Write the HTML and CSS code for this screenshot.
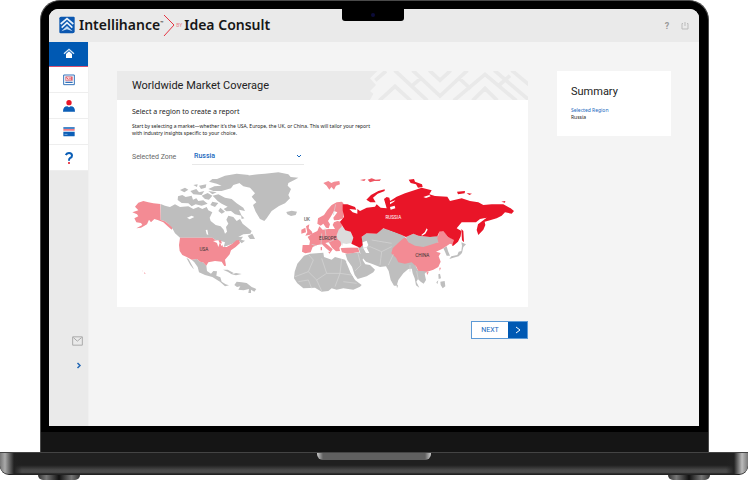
FILE: index.html
```html
<!DOCTYPE html>
<html lang="en">
<head>
<meta charset="utf-8">
<meta name="viewport" content="width=device-width, initial-scale=1">
<title>Intellihance by Idea Consult</title>
<link rel="stylesheet" href="styles.css">
</head>
<body>
<div class="laptop">
  <div class="lid">
    <div class="notch"><span class="camera"></span></div>
    <div class="screen">
      <header class="topbar">
        <a class="brand" href="#">
          <svg class="brand-mark" viewBox="0 0 48 54" aria-hidden="true">
            <path fill="#0b57b0" d="M6 2H44Q47 2 47 5V46Q47 52 41 52H5Q1 52 1 48V7Q1 2 6 2Z"/>
            <g fill="none" stroke="#e6f0fb" stroke-width="5"><path d="M5 24 24 8 43 24M8 35 24 20 40 35"/></g>
            <path fill="#c3dbf4" d="M7 46 24 30 41 46 24 40Z"/>
          </svg>
          <span class="brand-name">Intellihance<sup>™</sup></span>
          <svg class="brand-arrow" viewBox="0 0 12 24" aria-hidden="true"><path d="M1 1 11 11 1 22"/></svg>
          <span class="brand-by">BY</span>
          <span class="brand-name">Idea Consult</span>
        </a>
        <div class="tools">
          <button class="tool" type="button" aria-label="Help">?</button>
          <button class="tool" type="button" aria-label="Log out">
            <svg viewBox="0 0 8 8" aria-hidden="true"><path d="M2 1.5H1V7H7V1.5H6M4 0V4"/></svg>
          </button>
        </div>
      </header>
      <div class="workspace">
        <nav class="sidebar">
          <a class="nav-item current" href="#" aria-label="Home">
            <svg viewBox="0 0 36 36"><path fill="#fff" d="M9 18 18 10 27 18V30H9Z"/><path fill="none" stroke="#d5e6f7" stroke-width="4" d="M3 17 18 4 33 17"/></svg>
          </a>
          <a class="nav-item" href="#" aria-label="Reports">
            <svg viewBox="0 0 36 36"><path fill="#fff" stroke="#3473bb" stroke-width="3" d="M2 3H34V32H2Z"/><path fill="#fbd3d5" stroke="#bd6379" stroke-width="2" d="M8 8H28V20H8Z"/><path fill="none" stroke="#e94b57" stroke-width="3" d="M10 10 16 17M21 17V11M26 18V9"/><path stroke="#3473bb" stroke-width="4" d="M7 25H29"/></svg>
          </a>
          <a class="nav-item" href="#" aria-label="Account">
            <svg viewBox="0 0 36 36"><circle cx="18" cy="8" r="8" fill="#e91528"/><path fill="#0c5fb7" d="M0 35Q0 19 13 19L18 22 23 19Q36 19 36 35Z"/></svg>
          </a>
          <a class="nav-item" href="#" aria-label="Billing">
            <svg viewBox="0 0 36 36"><path fill="#0c5fb7" d="M1 4H35V8H1ZM1 17H35V29Q35 31 33 31H3Q1 31 1 29Z"/><path fill="#f17a84" d="M1 9H35V14H1Z"/><path stroke="#fff" stroke-width="2" d="M5 25H8M10 25H13"/></svg>
          </a>
          <a class="nav-item" href="#" aria-label="Support">
            <svg viewBox="0 0 36 36"><path fill="none" stroke="#0c5fb7" stroke-width="6" d="M8 9Q12 3 18 3 27 3 27 11 27 16 21 18 18 20 18 26"/><path fill="#e94b57" d="M15 30H21V36H15Z"/></svg>
          </a>
          <div class="sidebar-foot">
            <a class="foot-link" href="#" aria-label="Messages"><svg class="mail" viewBox="0 0 33 29"><path d="M2 2H31V27H2ZM4 4 16 15 29 4"/></svg></a>
            <button class="foot-link" type="button" aria-label="Expand menu"><svg class="expand" viewBox="0 0 12 18"><path d="M3 4 8 9 3 14"/></svg></button>
          </div>
        </nav>
        <main class="content">
          <div class="main-col">
            <section class="card">
              <div class="card-head">
                <h1>Worldwide Market Coverage</h1>
                <svg class="pattern" viewBox="0 0 474 87" preserveAspectRatio="none" aria-hidden="true">
                  <path fill="#f4f4f4" d="M22 0H474V87H0L10 68 0 60 18 42 0 22Z"/>
                  <path fill="none" stroke="#e9e9e9" stroke-width="11" d="M28 89 75 46 122 89M16 28 48 0M74-2 172 89M128-2 210 75 292-2M178-2 210 28 242-2M251 89 345 10 439 89M308 89 345 52 382 89M373-2 478 88M425-2 478 42M124 46 152 22M268 22 302 54M388 42 420 14"/>
                </svg>
              </div>
              <div class="card-body">
                <h2>Select a region to create a report</h2>
                <p class="intro">Start by selecting a market—whether it’s the USA, Europe, the UK, or China. This will tailor your report with industry insights specific to your choice.</p>
                <div class="field">
                  <label for="zone">Selected Zone</label>
                  <div class="select-box">
                    <select id="zone"><option>Russia</option><option>USA</option><option>Europe</option><option>UK</option><option>China</option></select>
                    <svg class="caret" viewBox="0 0 6 4" aria-hidden="true"><path d="M1 1 3 3 5 1"/></svg>
                  </div>
                </div>
                <svg class="map" viewBox="21 21 1146 375" role="img" aria-label="World map">
                  <g class="land">
                    <path d="M107 117 120 122 135 126 150 118 165 126 190 124 205 132 220 126 232 132 245 126 250 136 262 142 254 158 257 168 272 180 287 184 296 194 300 206 306 200 303 186 310 176 304 164 310 152 325 156 335 168 345 162 353 176 368 188 380 198 376 206 355 208 340 216 354 215 348 224 360 227 350 235 340 226 322 236 306 242 296 246 300 232 288 228 270 224 262 218 165 218 150 205 143 192 130 176 118 168 107 165Z"/>
                    <path d="M368 212 382 206 390 222 375 222Z"/>
                    <path d="M263 92 280 88 300 98 320 102 335 115 355 128 360 138 342 134 350 152 330 148 318 138 304 139 296 132 308 125 290 116 278 108Z"/>
                    <path d="M159 94 172 90 182 96 200 92 204 104 214 100 220 108 235 106 248 116 230 122 212 118 200 124 190 115 170 114 158 105Z"/>
                    <path d="M276 42 300 32 335 26 372 30 366 40 350 43 342 55 325 60 318 70 290 78 265 78 250 72 268 64 290 62 275 56 252 50 262 42Z"/>
                    <path d="M165 75 180 68 190 74 178 82ZM196 78 214 72 222 82 238 78 230 90 205 88ZM205 60 218 58 216 66ZM222 62 244 58 242 68 228 72ZM230 92 248 84 262 92 252 104 240 102ZM250 78 275 82 262 88ZM262 110 280 114 270 126 256 120ZM286 128 300 140 290 146 280 138ZM348 150 358 160 350 162Z"/>
                    <path d="M340 42 365 32 400 28 420 26 460 22 490 28 497 36 520 38 508 45 490 54 488 62 498 72 490 90 495 100 480 115 462 123 440 138 425 160 418 168 405 162 392 140 384 120 394 112 380 95 390 85 375 68 355 64 340 52Z"/>
                    <path d="M484 141 500 137 516 140 512 150 498 153 487 148Z"/>
                    <path d="M200 284 216 282 225 290 234 292 244 302 246 318 258 326 265 318 276 319 274 332 286 337 290 350 302 358 312 361 300 364 285 350 262 336 240 330 222 322 218 306 208 292ZM184 278 191 283 205 308 206 313 196 300Z"/>
                    <path d="M294 314 308 314 326 324 320 328 308 320ZM320 328 333 324 350 327 333 331ZM328 360 335 350 350 352 365 354 380 366 394 372 388 380 378 374 378 384 370 384 372 372 356 376 340 374 346 364 336 366Z"/>
                    <g transform="translate(405)">
                      <path d="M132 272 150 266 190 263 192 276 215 284 225 276 255 284 264 298 272 320 285 345 305 360 300 365 280 374 250 370 230 374 215 370 205 378 185 380 165 368 130 370 112 355 102 340 104 320 112 296 124 282Z"/>
                      <path d="M256 266 298 262 310 275 308 285 316 298 330 300 345 314 340 322 320 334 293 342 284 330 276 305 262 285Z"/>
                      <path d="M294 246 302 245 305 215 320 205 350 206 355 196 375 190 395 196 410 200 420 206 434 215 460 250 465 300 468 310 445 312 430 325 415 345 410 362 402 362 392 345 386 318 378 304 360 306 335 296 318 290 305 275Z"/>
                    </g>
                    <g transform="translate(795)">
                      <path d="M65 310 60 300 75 300 85 318 112 318 104 326 108 345 101 356 92 350 84 342 79 350 88 368 78 361 74 340 68 325ZM48 216 70 206 85 212 120 216 145 212 150 228 120 250 90 252 55 236Z"/>
                      <path d="M160 250 170 244 174 258 180 272 170 272 165 260ZM178 282 184 274 202 270 206 260 214 258 216 242 214 232 228 238 220 246 216 264 206 274 190 278ZM145 328 150 326 153 340 146 342ZM151 350 164 348 166 364 158 370 152 360ZM139 352 145 346 142 358ZM19 355 24 362 21 370Z"/>
                    </g>
                  </g>
                  <g class="open">
                    <g transform="translate(405)">
                      <path class="pale" d="M234 190 248 184 262 196 272 200 280 218 275 234 262 236 250 246 240 232 228 222 230 205Z"/>
                      <path d="M190 54 205 48 214 54 222 50 238 48 240 58 228 62 222 74 214 66 208 74 200 62ZM138 184 148 178 146 190 156 200 158 208 136 212 142 202ZM124 194 136 188 138 202 124 206Z"/>
                      <path d="M250 114 245 110 230 112 215 120 202 135 192 150 174 160 172 176 182 182 190 176 198 188 206 190 210 178 204 168 214 152 222 138 232 142 220 158 222 166 236 165 250 160Z"/>
                      <path d="M143 216 158 205 172 198 178 184 188 194 205 192 225 192 218 180 222 172 232 168 244 170 246 184 236 194 230 210 232 222 242 230 244 240 238 248 240 258 228 259 216 248 206 232 196 234 208 244 218 253 212 262 198 250 186 238 172 240 158 246 152 262 136 265 126 260 128 240 148 240 150 228Z"/>
                      <path d="M242 250 262 246 294 248 298 260 280 264 262 266 246 262ZM204 260 212 262 209 266ZM182 246 186 246 186 256 182 256Z"/>
                    </g>
                    <path d="M30 125 40 113 55 108 70 112 85 115 106 117 107 165 118 168 130 176 142 188 140 194 128 184 115 172 100 166 88 162 78 172 72 164 66 178 48 188 34 190 52 180 48 174 34 172 28 160 40 154 36 148 22 142 40 136Z"/>
                    <path d="M165 218 262 218 272 226 288 226 294 246 305 246 322 236 334 226 342 225 345 234 332 246 318 256 314 268 300 284 303 302 298 303 290 290 270 288 250 292 244 302 234 292 225 290 216 282 200 284 185 276 172 270 164 258 162 240ZM57 322 62 325 59 327ZM51 318 53 317 54 319Z"/>
                    <path transform="translate(795)" d="M8 250 22 236 40 220 48 218 55 232 75 242 100 246 120 240 145 232 142 220 148 200 160 196 174 216 196 224 190 240 180 236 162 248 156 252 138 260 152 264 146 274 152 290 145 306 130 314 112 320 98 318 85 318 78 304 65 292 45 296 25 292 18 278 4 265ZM109 322 116 321 112 330ZM148 308 153 308 149 318Z"/>
                  </g>
                  <g class="picked">
                    <path transform="translate(405)" d="M248 118 262 118 285 126 289 134 268 132 278 142 292 146 292 132 300 138 320 128 345 125 350 118 362 128 380 130 372 102 380 96 388 98 392 116 420 105V206L395 198 370 190 350 206 320 205 305 215 308 240 300 248 290 244 274 236 280 218 272 200 256 196 248 184 240 170 252 156 248 136Z"/>
                    <path d="M724 104 738 90 760 78 779 73 779 78 758 86 744 98 752 112 736 112Z"/>
                    <g class="open"><path d="M705 45 722 42 718 48ZM728 44 740 40 752 44 768 43 764 48 748 48 735 52Z"/></g>
                    <g transform="translate(795)">
                      <path d="M0 108 20 95 45 85 75 75 95 68 125 76 118 88 135 93 172 95 180 108 215 100 240 108 265 112 280 120 305 118 340 118 362 130 372 138 365 146 345 142 335 152 320 160 300 166 284 170 286 180 280 194 265 210 260 195 264 178 290 158 270 162 258 172 215 172 200 190 214 198 212 214 204 230 190 242 186 242 192 225 174 216 160 198 148 200 142 214 120 216 85 212 70 206 48 216 30 208 0 196Z"/>
                      <path d="M56 44 72 42 75 50 96 58 98 66 84 68 78 58 62 54ZM201 80 225 78 224 85 204 88ZM230 84 246 86 238 90ZM334 110 346 108 345 113ZM214 192 220 198 222 232 216 226Z"/>
                    </g>
                  </g>
                  <g class="water">
                    <path d="M186 158 200 152 208 156 194 163ZM242 195 247 194 250 210 245 208ZM264 228 280 226 284 234 280 246 276 234ZM286 234 294 236 290 244Z"/>
                    <path transform="translate(405)" d="M308 232 320 227 325 240 320 248 328 264 318 264 310 250ZM248 235 260 237 274 240 290 247 262 248 246 248ZM258 290 266 294 278 320 290 344 284 342 272 324Z"/>
                    <path transform="translate(795)" d="M94 210 104 202 110 190 113 194 106 206 96 212ZM100 96 118 90 122 94 108 99ZM0 112 16 106 12 110 0 118ZM0 126 14 122 16 130 2 134Z"/>
                  </g>
                  <g class="borders">
                    <path d="M510 335 550 320 565 285 550 268M550 320 575 345 605 325 645 325 650 282M605 325 590 280M645 325 630 365M550 345 560 370M575 345 590 378M520 350 550 345M645 325 680 330M655 350 695 355M698 262 708 300M708 300 690 318M735 245 770 260 800 245M735 245 710 250M770 260 765 300M790 300 805 268M740 225 800 235M855 300 855 320M875 318 880 345M588 240 590 205M610 232 632 222M560 238 575 242M600 190 604 222M625 150 632 118"/>
                  </g>
                  <g class="names">
                    <text x="237" y="259">USA</text>
                    <text x="546" y="167">UK</text>
                    <text x="608" y="224">EUROPE</text>
                    <text class="on-dark" x="805" y="162">RUSSIA</text>
                    <text x="892" y="276">CHINA</text>
                  </g>
                </svg>
              </div>
            </section>
            <button class="next" type="button"><span>NEXT</span><span class="next-icon"><svg viewBox="0 0 6 8" aria-hidden="true"><path d="M1 1 5 4 1 7"/></svg></span></button>
          </div>
          <aside class="summary">
            <h2>Summary</h2>
            <dl><dt>Selected Region</dt><dd>Russia</dd></dl>
          </aside>
        </main>
      </div>
    </div>
    <div class="chin"></div>
  </div>
  <div class="base"><span class="lip"></span></div>
  <div class="feet"><span></span><span></span></div>
</div>
</body>
</html>
```
FILE: styles.css
```css
* { box-sizing: border-box; }
body { margin: 0; background: #fff; color: #222; font-family: Roboto, "Open Sans", sans-serif; }
h1, h2, p, dl, dd { margin: 0; font-weight: 400; }
button, select { font: inherit; border: 0; padding: 0; background: none; cursor: pointer; }
a { color: inherit; text-decoration: none; }
svg { display: block; }

/* Laptop frame */
.laptop { min-height: 100vh; display: flex; flex-direction: column; }
.lid { position: relative; flex: 1; display: flex; flex-direction: column; margin: 0 39px 0 40px; padding: 8px 9px 0 8px; background: #000; border: solid #4a4a4a; border-width: 1px 1px 0; border-radius: 20px 20px 0 0; }
.notch { position: absolute; top: 7px; left: calc(50% - 33px); width: 62px; height: 13px; background: #000; border-radius: 0 0 3px 3px; display: grid; place-items: center; }
.camera { width: 4px; height: 4px; border-radius: 50%; background: #0b0b38; }
.screen { flex: 1; display: flex; flex-direction: column; background: #f4f4f4; border-radius: 9px 9px 0 0; overflow: hidden; }
.chin { height: 20px; margin: 6px -9px 0 -8px; background: #151515; }
.base { height: 23px; border-top: 1px solid #444; border-bottom: 1px solid #222; border-radius: 0 0 9px 9px; background: linear-gradient(90deg, #777 0, #aaa 5px, #222 14px, transparent 22px calc(100% - 22px), #222 calc(100% - 14px), #bbb calc(100% - 6px), #777 100%), linear-gradient(#202020 0 58%, #484848 80%, #4c4c4c 92%, #222); }
.lip { display: block; width: 114px; height: 7px; margin: 0 auto; border-radius: 0 0 6px 6px; background: linear-gradient(90deg, #ccc, #606060 6px calc(100% - 6px), #ccc); }
.feet { height: 5px; display: flex; justify-content: space-between; padding: 0 38px; }
.feet span { width: 42px; border-radius: 0 0 9px 9px; background: linear-gradient(90deg, #333, #777 20%, #111 50%, #777 80%, #333); }

/* Top bar */
.topbar { height: 33px; padding: 0 10px; display: flex; align-items: center; justify-content: space-between; background: #eaeaea; }
.brand { display: flex; align-items: center; height: 24px; margin-bottom: 2px; color: #161616; }
.brand-mark { width: 16px; height: 18px; margin-right: 4px; }
.brand-name { font: 600 14px/20px "Noto Sans", "Open Sans", sans-serif; white-space: nowrap; }
.brand-name sup { font-size: 4px; line-height: 0; vertical-align: 6px; }
.brand-arrow { width: 12px; height: 24px; margin-top: 2px; fill: none; stroke: #e53442; stroke-width: 1; }
.brand-by { margin: 0 2px 0 1px; color: #e88088; font-size: 5px; }
.tools { display: flex; align-items: center; gap: 10px; }
.tool { min-width: 8px; color: #999; font-size: 9px; font-weight: 700; line-height: 12px; }
.tool svg { width: 8px; height: 8px; fill: none; stroke: #bbb; stroke-width: 1; }

/* Sidebar */
.workspace { flex: 1; display: flex; }
.sidebar { flex: none; width: 40px; display: flex; flex-direction: column; background: #eaeaea; border-right: 1px solid #f0f0f0; }
.nav-item { height: 26px; display: grid; place-items: center; background: #fff; border-bottom: 1px solid #eee; }
.nav-item svg { width: 12px; height: 12px; }
.nav-item.current { height: 25px; background: #0059b3; border-bottom-color: #d84f70; }
.sidebar-foot { margin-top: auto; padding: 0 5px 56px 0; display: flex; flex-direction: column; align-items: flex-end; gap: 15px; }
.mail { width: 11px; height: 10px; fill: none; stroke: #aaa; stroke-width: 3; }
.foot-link { display: block; }
.expand { width: 6px; height: 9px; margin-right: 1px; fill: none; stroke: #2569b5; stroke-width: 3; }

/* Content */
.content { flex: 1; display: flex; align-items: flex-start; gap: 29px; padding: 29px 28px; }
.main-col { flex: 1; display: flex; flex-direction: column; align-items: flex-end; gap: 14px; }
.card { width: 100%; background: #fff; }
.card-head { height: 29px; padding-left: 15px; display: flex; align-items: center; justify-content: space-between; background: #eaeaea; overflow: hidden; }
.card-head h1 { font-size: 11px; line-height: 16px; white-space: nowrap; }
.pattern { width: 158px; height: 29px; }
.card-body { padding: 7px 14px 10px 15px; }
.card-body h2 { font: 400 7px/10px "Noto Sans", sans-serif; }
.intro { max-width: 245px; margin-top: 6px; font: 400 5px/7px "Noto Sans", sans-serif; }
.field { margin-top: 11px; display: flex; align-items: center; font-size: 7px; line-height: 16px; color: #666; }
.field label { width: 60px; }
.select-box { position: relative; width: 112px; border-bottom: 1px solid #e8e8e8; }
.select-box select { display: block; width: 100%; height: 16px; padding-left: 2px; appearance: none; color: #1767bd; font-weight: 500; }
.caret { position: absolute; right: 2px; top: 6px; width: 6px; height: 4px; fill: none; stroke: #1767bd; pointer-events: none; }

/* Map */
.map { width: 100%; height: auto; margin-top: 7px; }
.land { fill: #bebebe; }
.open { fill: #f38b94; }
.pale { fill: #dcdcdc; }
.picked { fill: #e91528; }
.picked .open { fill: #ee5562; }
.water { fill: #fff; }
.borders { fill: none; stroke: #d6d6d6; stroke-width: 2; }
.names { fill: #333; font-size: 14px; text-anchor: middle; }
.on-dark { fill: #fff; }

/* Next button and summary */
.next { height: 18px; display: flex; align-items: stretch; border: 1px solid #5c9ad6; background: #fff; color: #1767bd; font-size: 7px; line-height: 16px; }
.next span:first-child { width: 36px; }
.next .next-icon { width: 19px; display: grid; place-items: center; background: #0059b3; }
.next svg { width: 6px; height: 8px; fill: none; stroke: #fff; stroke-width: 1; }
.summary { width: 114px; min-height: 65px; padding: 13px 14px 12px; background: #fff; }
.summary h2 { font-size: 11px; line-height: 16px; }
.summary dl { margin-top: 7px; font: 400 5px/7px "Noto Sans", sans-serif; }
.summary dt { color: #1767bd; }
```
